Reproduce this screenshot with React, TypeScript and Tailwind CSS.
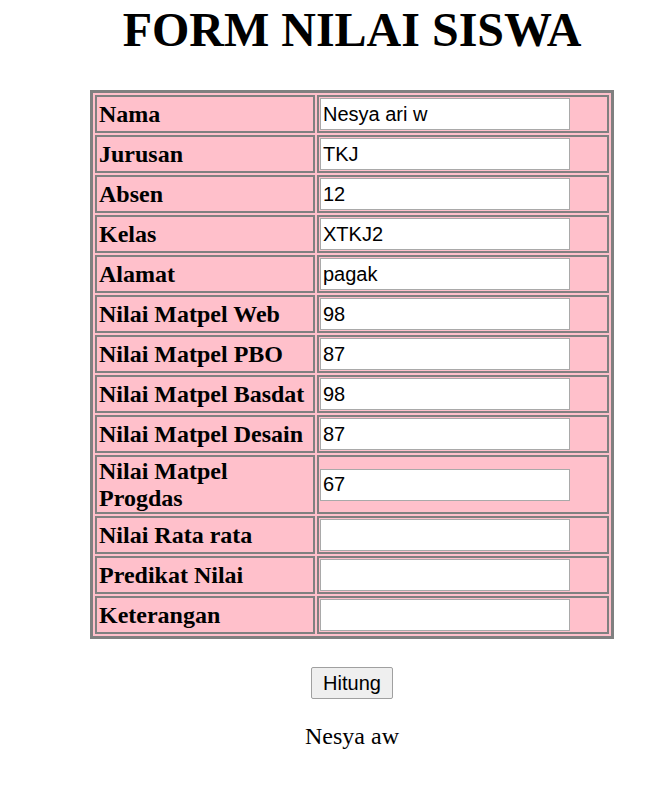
const rows: { label: string; value: string }[] = [
  { label: "Nama", value: "Nesya ari w" },
  { label: "Jurusan", value: "TKJ" },
  { label: "Absen", value: "12" },
  { label: "Kelas", value: "XTKJ2" },
  { label: "Alamat", value: "pagak" },
  { label: "Nilai Matpel Web", value: "98" },
  { label: "Nilai Matpel PBO", value: "87" },
  { label: "Nilai Matpel Basdat", value: "98" },
  { label: "Nilai Matpel Desain", value: "87" },
  { label: "Nilai Matpel Progdas", value: "67" },
  { label: "Nilai Rata rata", value: "" },
  { label: "Predikat Nilai", value: "" },
  { label: "Keterangan", value: "" },
];

const App: React.FC = () => {
  return (
    <div className="min-h-[797px] bg-white pl-[34px] font-['Liberation_Serif',serif] text-black">
      <div className="flex flex-col items-center">
        <h1 className="mt-[2px] text-[48px] font-bold leading-[55px]">FORM NILAI SISWA</h1>

        <div className="mt-[33px] grid grid-cols-[220px_292px] gap-[2px] border-[3px] border-[#808080] bg-[#ffc0cb] p-[2px]">
          {rows.map((row) => (
            <div key={row.label} className="contents">
              <div className="flex items-center border-2 border-[#808080] px-[2px] py-[1px] text-[24px] font-bold leading-[26.5px]">
                {row.label}
              </div>
              <div className="flex items-center border-2 border-[#808080] p-[1px]">
                <input
                  type="text"
                  defaultValue={row.value}
                  className="h-[32px] w-[250px] border border-[#a9a9a9] bg-white px-[2px] font-['Liberation_Sans',sans-serif] text-[20px] text-black outline-none"
                />
              </div>
            </div>
          ))}
        </div>

        <button className="mt-[28px] h-[32px] w-[82px] rounded-[2px] border border-[#a0a0a0] bg-[#efefef] font-['Liberation_Sans',sans-serif] text-[20px] text-black">
          Hitung
        </button>

        <p className="mt-[23px] text-[24px] leading-[28px]">Nesya aw</p>
      </div>
    </div>
  );
};

export default App;
